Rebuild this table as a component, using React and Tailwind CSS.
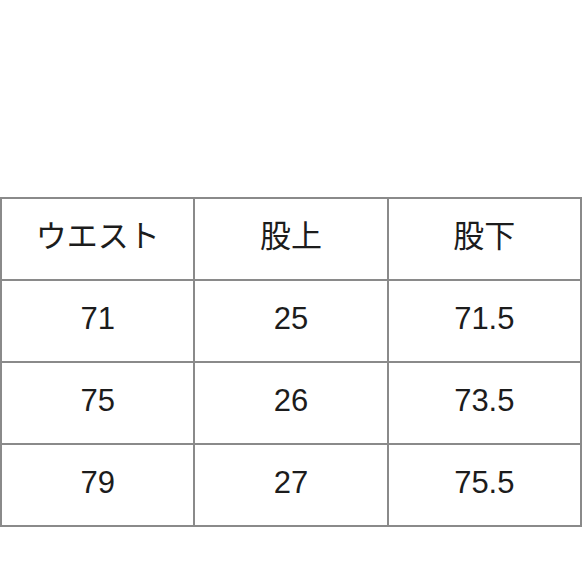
import React from "react";

const rows = [
  ["ウエスト", "股上", "股下"],
  ["71", "25", "71.5"],
  ["75", "26", "73.5"],
  ["79", "27", "75.5"],
];

export default function App() {
  return (
    <div
      className="w-[582px] h-[582px] bg-white pt-[197px]"
      style={{ fontFamily: '"Liberation Sans", "Noto Sans CJK JP", sans-serif' }}
    >
      <div className="grid grid-cols-3 border-t-2 border-l-2 border-[#8a8a8a] ml-[0px] w-[582px]">
        {rows.map((row, i) =>
          row.map((cell, j) => (
            <div
              key={`${i}-${j}`}
              className="h-[82px] flex items-center justify-center border-r-2 border-b-2 border-[#8a8a8a] text-[31px] text-[#1c1c1c] pb-[4px]"
            >
              {cell}
            </div>
          ))
        )}
      </div>
    </div>
  );
}
